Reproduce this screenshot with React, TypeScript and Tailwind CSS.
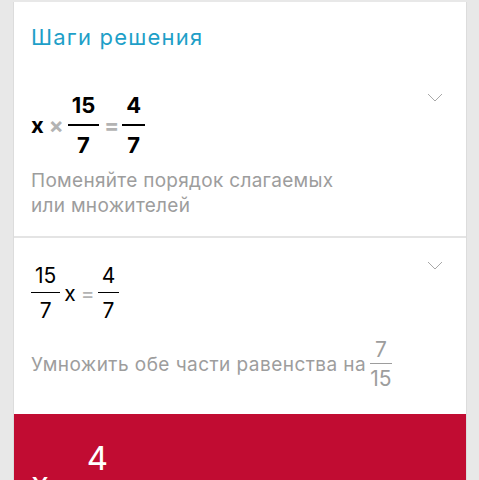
import React from "react";

function Fraction(props: {
  num: string;
  den: string;
  className?: string;
  numClass?: string;
  denClass?: string;
  lineClass?: string;
}) {
  const { num, den, className, numClass, denClass, lineClass } = props;
  return (
    <div className={"inline-flex flex-col items-stretch text-center " + (className ?? "")}>
      <div className={numClass}>{num}</div>
      <div className={lineClass} />
      <div className={denClass}>{den}</div>
    </div>
  );
}

function Chevron() {
  return (
    <svg width="16" height="9" viewBox="0 0 16 9" className="shrink-0">
      <polyline points="1,1 8,8 15,1" fill="none" stroke="#a8a8a8" strokeWidth="1" />
    </svg>
  );
}

export default function App() {
  return (
    <div
      className="w-[479px] h-[480px] overflow-hidden bg-[#e8e8e8] pl-[13px] pr-[12px] pt-[2px]"
      style={{ fontFamily: "Inter, 'Liberation Sans', sans-serif" }}
    >
      <div className="h-[600px] bg-white border-l border-r border-[#dcdcdc] flex flex-col">
        {/* Header */}
        <div className="px-[17px] pt-[23px] text-[22px] leading-[24px] tracking-[1.2px] text-[#1e9fc8]">
          Шаги решения
        </div>

        {/* Step 1 */}
        <div className="pl-[17px] pr-[23px] pt-[45px] pb-[18px] flex justify-between items-start">
          <div className="flex flex-col">
            <div className="flex items-center text-black font-bold text-[22px] leading-[22px]">
              <span>x</span>
              <span className="ml-[5px] text-[#b3b3b3]">×</span>
              <Fraction
                num="15"
                den="7"
                className="ml-[4px]"
                numClass="px-[4px] pb-[8px]"
                lineClass="h-[2px] bg-black"
                denClass="pt-[8px]"
              />
              <span className="ml-[5px] text-[#b3b3b3]">=</span>
              <Fraction
                num="4"
                den="7"
                className="ml-[3px]"
                numClass="px-[4px] pb-[8px]"
                lineClass="h-[2px] bg-black"
                denClass="pt-[8px]"
              />
            </div>
            <div className="mt-[12px] text-[19px] leading-[25px] tracking-[0.3px] text-[#9d9d9d]">
              Поменяйте порядок слагаемых
              <br />
              или множителей
            </div>
          </div>
          <div className="-mt-[1px]">
            <Chevron />
          </div>
        </div>

        <div className="h-[2px] bg-[#e4e4e4]" />

        {/* Step 2 */}
        <div className="pl-[17px] pr-[23px] pt-[23px] pb-[25px] flex justify-between items-start">
          <div className="flex flex-col pt-[4px]">
            <div className="flex items-center text-black text-[21px] leading-[21px]">
              <Fraction
                num="15"
                den="7"
                numClass="px-[4px] pb-[6px]"
                lineClass="h-[1px] bg-black"
                denClass="pt-[7px]"
              />
              <span className="ml-[4px]">x</span>
              <span className="ml-[5px] text-[#b3b3b3]">=</span>
              <Fraction
                num="4"
                den="7"
                className="ml-[3px]"
                numClass="px-[4px] pb-[6px]"
                lineClass="h-[1px] bg-black"
                denClass="pt-[7px]"
              />
            </div>
            <div className="mt-[18px] flex items-center text-[#9d9d9d]">
              <span className="text-[19px] leading-[25px] tracking-[0.45px]">Умножить обе части равенства на</span>
              <Fraction
                num="7"
                den="15"
                className="ml-[4px] text-[21px] leading-[21px]"
                numClass="px-[3px] pb-[3px]"
                lineClass="h-[1px] bg-[#9d9d9d]"
                denClass="pt-[4px]"
              />
            </div>
          </div>
          <Chevron />
        </div>

        {/* Result */}
        <div className="flex-1 bg-[#c10c32] pl-[17px] pt-[28px] text-white">
          <div className="flex items-center text-[33px] leading-[33px]">
            <span>x</span>
            <span className="ml-[8px]">=</span>
            <Fraction
              num="4"
              den="7"
              className="ml-[4px]"
              numClass="px-[4px] pb-[6px]"
              lineClass="h-[2px] bg-white"
              denClass="pt-[8px]"
            />
          </div>
        </div>
      </div>
    </div>
  );
}
